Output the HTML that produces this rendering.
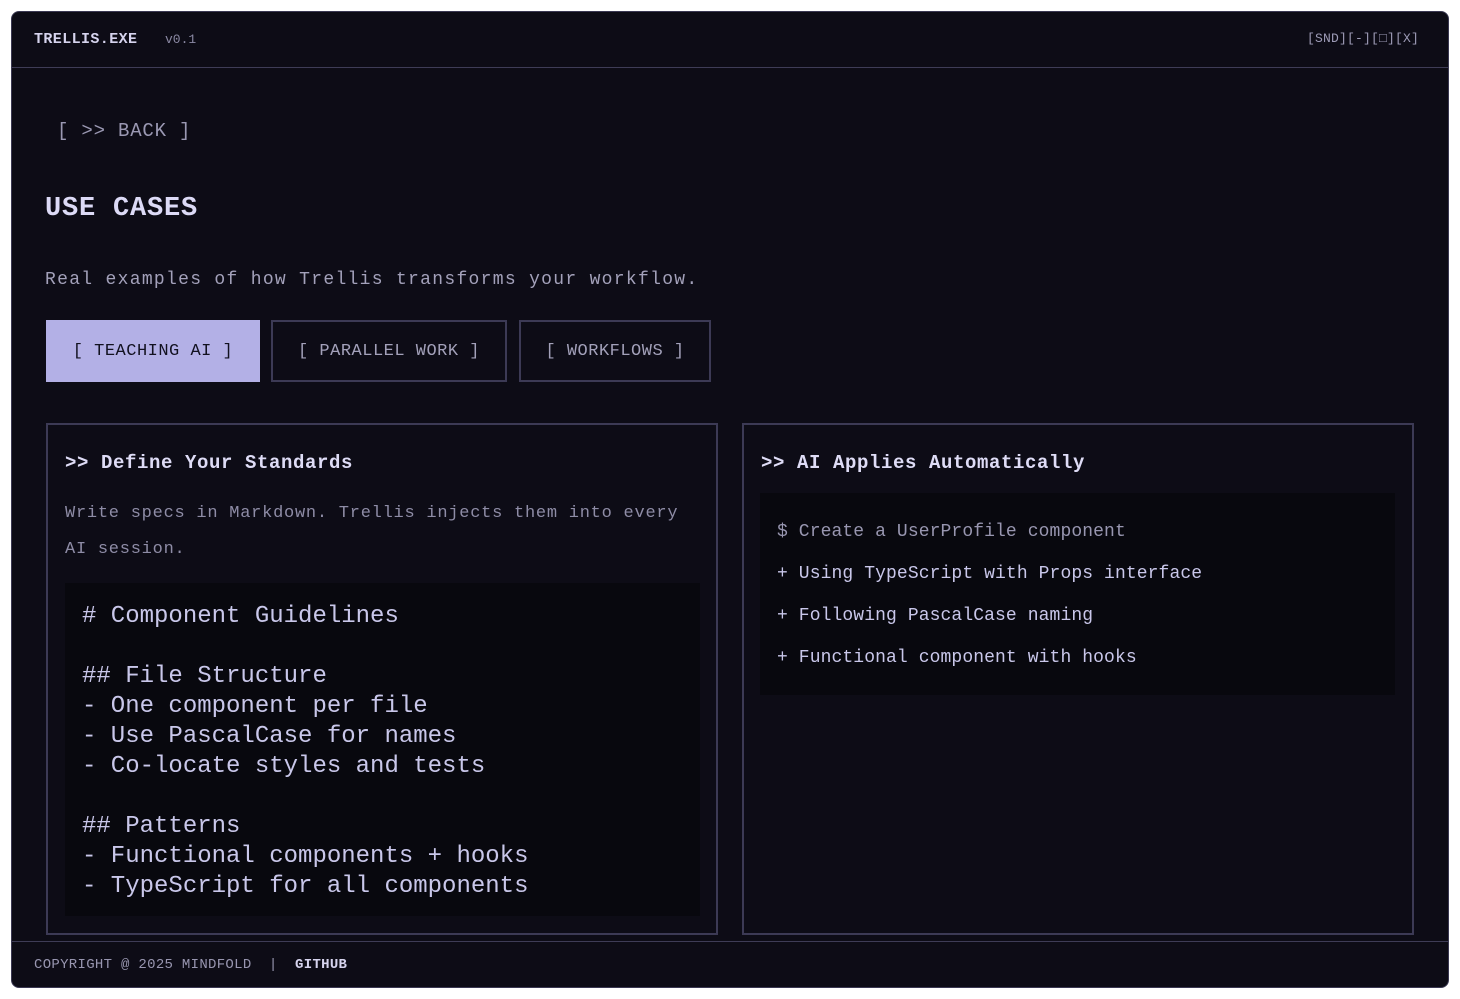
<!DOCTYPE html>
<html><head><meta charset="utf-8"><style>
*{margin:0;padding:0;box-sizing:border-box}
body{width:1460px;height:999px;background:#fff;position:relative;font-family:"Liberation Mono","DejaVu Sans Mono",monospace;overflow:hidden}
.win{position:absolute;left:11px;top:11px;width:1438px;height:977px;background:#0d0c16;border:1px solid #3a3852;border-radius:8px;overflow:hidden}
.a{position:absolute;white-space:pre}
.hl{position:absolute;left:0;right:0;height:1px;background:#3e3c56}
.box{position:absolute;border:2px solid #3c3a55}
.blk{position:absolute;background:#08080e}
</style></head><body>
<div class="win">
 <div class="a" style="left:22px;top:19px;font-size:15px;letter-spacing:0.4px;color:#d6d4ee;font-weight:bold">TRELLIS.EXE</div>
 <div class="a" style="left:153px;top:20px;font-size:13px;color:#8b89a4">v0.1</div>
 <div class="a" style="left:1295px;top:19px;font-size:13px;color:#9d9bb6;letter-spacing:0.2px">[SND][-][□][X]</div>
 <div class="hl" style="top:55px"></div>
 <div class="a" style="left:45px;top:108px;font-size:19px;color:#9a98b2;letter-spacing:0.8px">[ &gt;&gt; BACK ]</div>
 <div class="a" style="left:33px;top:182px;font-size:27px;font-weight:bold;color:#dcdaf6;letter-spacing:0.8px">USE CASES</div>
 <div class="a" style="left:33px;top:258px;font-size:18px;color:#a3a1ba;letter-spacing:1.3px">Real examples of how Trellis transforms your workflow.</div>
 <div class="a" style="left:34px;top:308px;width:214px;height:62px;background:#b3b0e6;color:#121120;font-size:17px;letter-spacing:0.5px;text-align:center;line-height:64px">[ TEACHING AI ]</div>
 <div class="box" style="left:259px;top:308px;width:236px;height:62px;color:#a3a1ba;font-size:17px;letter-spacing:0.5px;text-align:center;line-height:60px">[ PARALLEL WORK ]</div>
 <div class="box" style="left:507px;top:308px;width:192px;height:62px;color:#a3a1ba;font-size:17px;letter-spacing:0.5px;text-align:center;line-height:60px">[ WORKFLOWS ]</div>

 <div class="box" style="left:34px;top:411px;width:672px;height:512px"></div>
 <div class="a" style="left:53px;top:440px;font-size:19px;font-weight:bold;color:#dedcf6;letter-spacing:0.6px">&gt;&gt; Define Your Standards</div>
 <div class="a" style="left:53px;top:484px;font-size:17px;color:#8e8ca6;line-height:36px;letter-spacing:0.75px">Write specs in Markdown. Trellis injects them into every
AI session.</div>
 <div class="blk" style="left:53px;top:571px;width:635px;height:333px"></div>
 <div class="a" style="left:70px;top:590px;font-size:24px;line-height:30px;color:#c9c7ea"># Component Guidelines

## File Structure
- One component per file
- Use PascalCase for names
- Co-locate styles and tests

## Patterns
- Functional components + hooks
- TypeScript for all components</div>

 <div class="box" style="left:730px;top:411px;width:672px;height:512px"></div>
 <div class="a" style="left:749px;top:440px;font-size:19px;font-weight:bold;color:#dedcf6;letter-spacing:0.6px">&gt;&gt; AI Applies Automatically</div>
 <div class="blk" style="left:748px;top:481px;width:635px;height:202px"></div>
 <div class="a" style="left:765px;top:499px;font-size:18px;line-height:42px;color:#c9c7ea;letter-spacing:0.1px"><span style="color:#9896b0">$ Create a UserProfile component</span>
+ Using TypeScript with Props interface
+ Following PascalCase naming
+ Functional component with hooks</div>

 <div class="hl" style="top:929px"></div>
 <div class="a" style="left:22px;top:945px;font-size:14px;color:#9896b0;letter-spacing:0.3px">COPYRIGHT @ 2025 MINDFOLD  |  <span style="color:#d6d4ee;font-weight:bold">GITHUB</span></div>
</div>
</body></html>
